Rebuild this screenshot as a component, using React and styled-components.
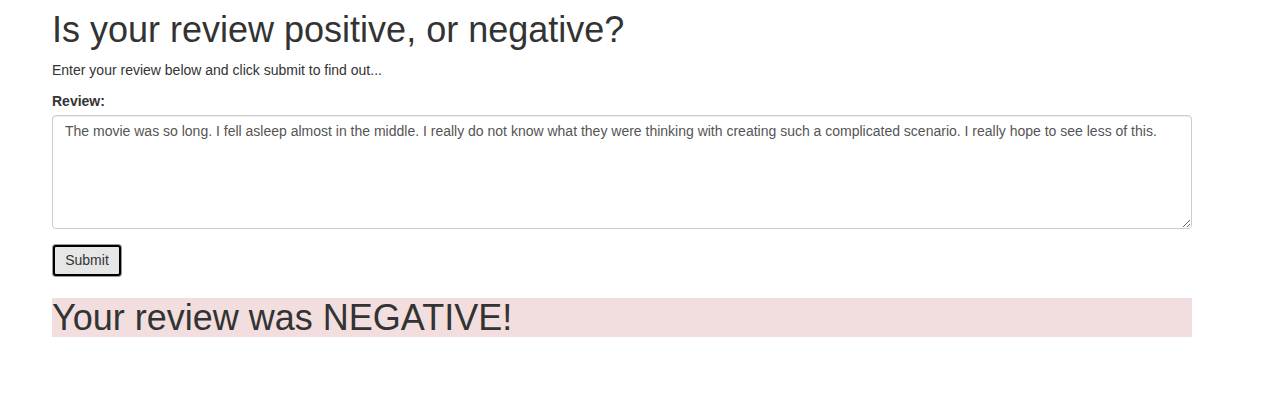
import React from "react";
import styled, { createGlobalStyle } from "styled-components";

const Global = createGlobalStyle`
  html, body { margin: 0; padding: 0; background: #fff; }
  body {
    font-family: "Liberation Sans", Arial, Helvetica, sans-serif;
    font-size: 14px;
    line-height: 1.42857;
    color: #333;
  }
  * { box-sizing: border-box; }
`;

const Container = styled.div`
  width: 1140px;
  margin-left: 52px;
`;

const Title = styled.h1`
  font-size: 36px;
  font-weight: 500;
  line-height: 1.1;
  margin: 10px 0 11px;
  color: #333;
`;

const Intro = styled.p`
  margin: 0 0 11px;
  font-size: 14px;
`;

const Label = styled.label`
  display: block;
  font-weight: bold;
  margin-bottom: 3px;
`;

const TextArea = styled.textarea`
  display: block;
  width: 100%;
  height: 114px;
  padding: 6px 12px;
  font-family: inherit;
  font-size: 14px;
  line-height: 1.42857;
  color: #555;
  background: #fff;
  border: 1px solid #ccc;
  border-radius: 4px;
  box-shadow: inset 0 1px 1px rgba(0,0,0,0.075);
  resize: vertical;
  margin: 0 0 16px;
`;

const Button = styled.button`
  width: 68px;
  height: 31px;
  font-family: inherit;
  font-size: 14px;
  color: #333;
  background: #e6e6e6;
  border: 2px solid #000;
  border-radius: 3px;
  box-shadow: 0 0 0 1px #999;
  margin: 0 1px;
  padding: 0;
  display: block;
`;

const Result = styled.div`
  margin-top: 22px;
  background: #f2dede;
  font-size: 36px;
  line-height: 1.1;
  color: #333;
  height: 39px;
`;

export default function App() {
  return (
    <>
      <Global />
      <Container>
        <Title>Is your review positive, or negative?</Title>
        <Intro>Enter your review below and click submit to find out...</Intro>
        <Label htmlFor="review">Review:</Label>
        <TextArea
          id="review"
          defaultValue="The movie was so long. I fell asleep almost in the middle. I really do not know what they were thinking with creating such a complicated scenario. I really hope to see less of this."
        />
        <Button>Submit</Button>
        <Result>Your review was NEGATIVE!</Result>
      </Container>
    </>
  );
}
